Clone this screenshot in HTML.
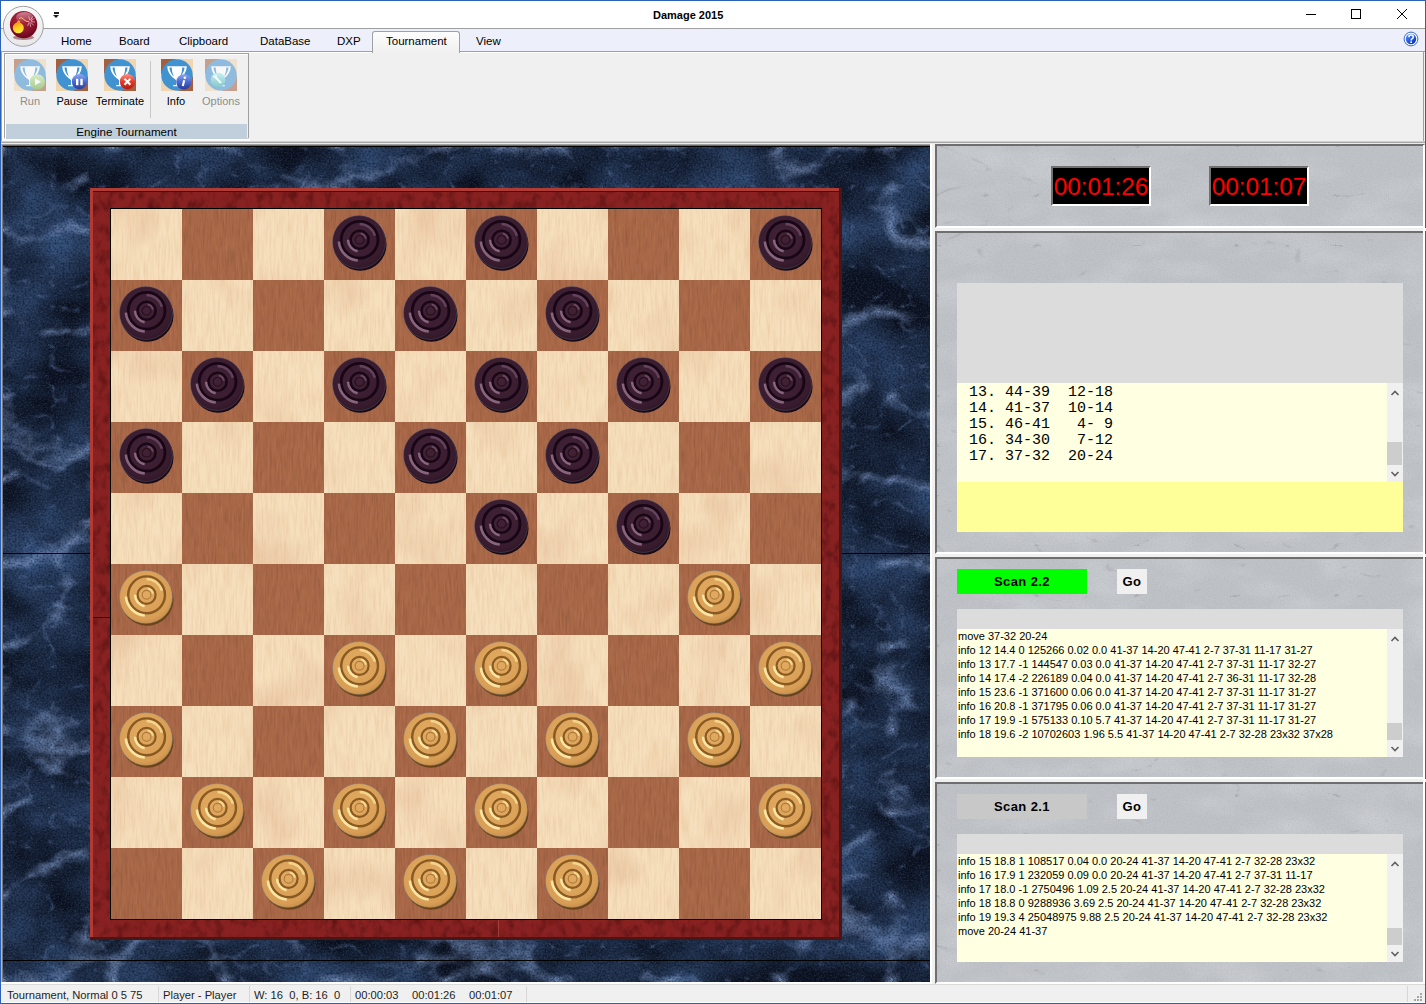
<!DOCTYPE html>
<html><head><meta charset="utf-8">
<style>
*{box-sizing:border-box}
html,body{margin:0;padding:0}
body{width:1426px;height:1004px;position:relative;overflow:hidden;background:#f0f0f0;font-family:"Liberation Sans",sans-serif;color:#000}
.a{position:absolute}
.tab{position:absolute;top:35px;font-size:11.5px;color:#000;line-height:13px;white-space:nowrap}
.rb{position:absolute;top:95px;font-size:11px;line-height:13px;white-space:nowrap;text-align:center}
.panel{position:absolute;left:935px;width:490px;border-top:2px solid #6e6e6e;border-left:2px solid #6e6e6e;border-right:2px solid #fff;border-bottom:2px solid #fff;background:#bec1c5;overflow:hidden}
.clock{position:absolute;top:166px;width:100px;height:40px;background:#000;border-top:2px solid #707070;border-left:2px solid #707070;border-right:2px solid #fff;border-bottom:2px solid #fff;color:#ff0000;font-size:24.5px;line-height:38px;text-align:center;letter-spacing:-0.1px}
.gray{position:absolute;left:957px;width:446px;background:#dcdcdc}
.list{position:absolute;left:957px;width:446px;background:#ffffe1;overflow:hidden}
.sb{position:absolute;left:1387px;width:16px;background:#f0f0f0}
.thumb{position:absolute;left:1387px;width:15px;background:#cdcdcd}
.btn{position:absolute;height:25px;font-weight:bold;font-size:13px;line-height:25px;text-align:center;letter-spacing:0.4px}
.eng{position:absolute;left:958px;font-size:11px;line-height:14px;white-space:pre;color:#000}
.st{position:absolute;top:989px;font-size:11.2px;line-height:13px;color:#1e1e1e;white-space:pre}
.sep{position:absolute;top:986px;width:1px;height:16px;background:#d7d7d7}
</style></head><body>

<!-- window frame -->
<div class="a" style="left:0;top:0;width:1426px;height:1px;background:#2b62b6"></div>
<div class="a" style="left:0;top:0;width:1px;height:1004px;background:#2b62b6"></div>
<div class="a" style="left:1425px;top:0;width:1px;height:1004px;background:#2b62b6"></div>
<div class="a" style="left:0;top:1003px;width:1426px;height:1px;background:#2b62b6"></div>

<!-- title bar -->
<div class="a" style="left:1px;top:1px;width:1424px;height:27px;background:#fff"></div>
<div class="a" style="left:1px;top:28px;width:1424px;height:1px;background:#a0a0a0"></div>
<div class="a" style="left:653px;top:9px;font-size:11px;font-weight:bold;line-height:13px;color:#000">Damage 2015</div>

<!-- tab row -->
<div class="a" style="left:1px;top:29px;width:1424px;height:22px;background:#edf0fa"></div>
<div class="a" style="left:1px;top:51px;width:1424px;height:1px;background:#a0a0a0"></div>

<!-- ribbon -->
<div class="a" style="left:1px;top:52px;width:1423px;height:89px;background:#f0f0f0;border-left:1px solid #a0a0a0"></div>
<div class="a" style="left:2px;top:52px;width:1421px;height:1px;background:#fff"></div>
<div class="a" style="left:2px;top:52px;width:2px;height:89px;background:#fff"></div>
<div class="a" style="left:1423px;top:52px;width:1px;height:89px;background:#a0a0a0"></div>
<div class="a" style="left:1px;top:141px;width:1424px;height:1px;background:#d0d0d0"></div>
<div class="a" style="left:1px;top:142px;width:1424px;height:1px;background:#a6a6a6"></div>
<div class="a" style="left:1px;top:143px;width:1424px;height:1px;background:#e8eaf8"></div>


<!-- logo -->
<svg class="a" style="left:0;top:3px" width="48" height="48" viewBox="0 0 48 48">
 <defs>
  <radialGradient id="lg1" cx="0.45" cy="0.3" r="0.75"><stop offset="0" stop-color="#b02a48"/><stop offset="0.55" stop-color="#921630"/><stop offset="1" stop-color="#640014"/></radialGradient>
  <linearGradient id="lgh" x1="0" y1="0" x2="0" y2="1"><stop offset="0" stop-color="#fff" stop-opacity="0.45"/><stop offset="1" stop-color="#fff" stop-opacity="0"/></linearGradient>
  <linearGradient id="lg2" x1="0.2" y1="0" x2="0.6" y2="1"><stop offset="0" stop-color="#f08a10"/><stop offset="0.55" stop-color="#ffd020"/><stop offset="1" stop-color="#ffe840"/></linearGradient>
  <linearGradient id="lg3" x1="0" y1="0" x2="0" y2="1"><stop offset="0" stop-color="#f8f8f8"/><stop offset="1" stop-color="#e8e8e8"/></linearGradient>
 </defs>
 <circle cx="23.3" cy="23.3" r="20" fill="url(#lg3)" stroke="#a0a0a0" stroke-width="1"/>
 <ellipse cx="23.5" cy="34.5" rx="10.5" ry="2.6" fill="#702030" opacity="0.5"/>
 <circle cx="23.6" cy="21.6" r="13.7" fill="url(#lg1)"/>
 <ellipse cx="24.5" cy="14.5" rx="8.5" ry="5.5" fill="url(#lgh)"/>
 <path d="M16.5 20.5 Q18.5 14.5 20.5 19.5 Z" fill="#f4a020"/>
 <circle cx="18.3" cy="24.8" r="5.5" fill="url(#lg2)"/>
 <path d="M19 16 Q20 14.2 21.8 15 Q23.5 16 25 17.5 Q27 19 29.2 18.4" stroke="#f4d070" stroke-width="0.9" fill="none"/>
 <g stroke="#f8e0e4" stroke-width="0.7" opacity="0.9" stroke-linecap="round">
  <path d="M30.6 17 L32.6 13.6 M31.2 17.6 L34.2 15.6 M31.4 18.6 L34.6 19 M31 19.6 L33.4 22 M30 20 L30.6 23.4 M29 19.6 L27.8 22.6 M29.6 16.6 L28.8 13.8"/>
 </g>
</svg>
<!-- quick access arrow -->
<div class="a" style="left:54px;top:12px;width:5px;height:2px;background:#1a1a1a"></div>
<div class="a" style="left:53px;top:15px;width:0;height:0;border-left:3.5px solid transparent;border-right:3.5px solid transparent;border-top:3.5px solid #1a1a1a"></div>

<!-- tabs -->
<div class="tab" style="left:61px">Home</div>
<div class="tab" style="left:119px">Board</div>
<div class="tab" style="left:179px">Clipboard</div>
<div class="tab" style="left:260px">DataBase</div>
<div class="tab" style="left:337px">DXP</div>
<div class="a" style="left:372px;top:31px;width:88px;height:22px;border:1px solid #a0a0a0;border-bottom:none;border-radius:3px 3px 0 0;background:linear-gradient(#fdfdfd,#f0f0f0)"></div>
<div class="tab" style="left:386px">Tournament</div>
<div class="tab" style="left:476px">View</div>
<!-- help -->
<svg class="a" style="left:1403px;top:31px" width="16" height="16" viewBox="0 0 16 16">
 <defs><linearGradient id="hg" x1="0.2" y1="0.1" x2="0.8" y2="0.9"><stop offset="0" stop-color="#4a86ff"/><stop offset="1" stop-color="#0634b8"/></linearGradient></defs>
 <circle cx="8" cy="8" r="6.9" fill="#f4f8ff" stroke="#3c6cc8" stroke-width="1"/>
 <circle cx="8" cy="8" r="5.2" fill="url(#hg)"/>
 <path d="M5.9 6.2 Q5.9 4.1 8.1 4.1 Q10.3 4.1 10.3 6 Q10.3 7.1 9 7.8 Q8.1 8.3 8.1 9.4" stroke="#fff" stroke-width="1.5" fill="none"/>
 <rect x="7.3" y="10.4" width="1.7" height="1.6" fill="#fff"/>
</svg>
<!-- window controls -->
<div class="a" style="left:1306px;top:14px;width:10px;height:1px;background:#000"></div>
<div class="a" style="left:1351px;top:9px;width:10px;height:10px;border:1px solid #000"></div>
<svg class="a" style="left:1396px;top:8px" width="12" height="12" viewBox="0 0 12 12"><path d="M1 1 L11 11 M11 1 L1 11" stroke="#000" stroke-width="1"/></svg>

<!-- ribbon group -->
<div class="a" style="left:4px;top:53px;width:245px;height:86px;border:1px solid #a0a0a0;border-bottom:none;border-radius:0 0 2px 2px;background:#f0f0f0"></div>
<div class="a" style="left:4px;top:139px;width:246px;height:2px;background:#fcfcfc"></div>
<div class="a" style="left:5px;top:54px;width:243px;height:1px;background:#fff"></div>
<div class="a" style="left:5px;top:54px;width:1px;height:85px;background:#fff"></div>
<div class="a" style="left:6px;top:124px;width:241px;height:15px;background:#c1cfdc"></div>
<div class="a" style="left:6px;top:126px;width:241px;font-size:11.6px;line-height:12px;text-align:center;color:#000">Engine Tournament</div>
<div class="a" style="left:150px;top:61px;width:1px;height:57px;background:#c8c8c8"></div>


<!-- ribbon icons -->
<svg class="a" style="left:0;top:0" width="0" height="0"><defs>
 <linearGradient id="bgG" x1="0" y1="0" x2="0" y2="1"><stop offset="0" stop-color="#c8e8a8"/><stop offset="1" stop-color="#68b040"/></linearGradient>
 <linearGradient id="bgB" x1="0" y1="0" x2="0" y2="1"><stop offset="0" stop-color="#90a8f0"/><stop offset="0.5" stop-color="#4a68d0"/><stop offset="1" stop-color="#2a3c98"/></linearGradient>
 <linearGradient id="bgR" x1="0" y1="0" x2="0" y2="1"><stop offset="0" stop-color="#ff9080"/><stop offset="0.5" stop-color="#e83828"/><stop offset="1" stop-color="#b01810"/></linearGradient>
 <linearGradient id="bgT" x1="0" y1="0" x2="0" y2="1"><stop offset="0" stop-color="#a0f0f0"/><stop offset="1" stop-color="#30a8b0"/></linearGradient>
</defs></svg>
<svg class="a" style="left:14px;top:59px;opacity:0.55;" width="32" height="32" viewBox="0 0 32 32">
 <rect width="32" height="32" fill="#f0d6b0"/>
 <path d="M0 0 H15 L0 15 Z" fill="#a2603e"/><path d="M32 32 H17 L32 17 Z" fill="#a2603e"/>
 <circle cx="16" cy="16" r="15.7" fill="#4092d0"/>
 <path d="M6.2 7.2 H25.8 Q25.5 14.5 19 19.6 L17 21 V26 H19.8 V27.2 H12.2 V26 H15 V21 L13 19.6 Q6.5 14.5 6.2 7.2 Z" fill="#fff"/>
 <path d="M8.4 8.5 H10.7 Q10.8 14 12.8 17.4 Q9 14 8.4 8.5 Z M23.6 8.5 H21.3 Q21.2 14 19.2 17.4 Q23 14 23.6 8.5 Z" fill="#4092d0"/>
 <circle cx="23.3" cy="22.8" r="7.6" fill="url(#bgG)"/><path d="M21 19.3 L27 22.8 L21 26.3 Z" fill="#fff"/>
</svg><svg class="a" style="left:56px;top:59px;" width="32" height="32" viewBox="0 0 32 32">
 <rect width="32" height="32" fill="#f0d6b0"/>
 <path d="M0 0 H15 L0 15 Z" fill="#a2603e"/><path d="M32 32 H17 L32 17 Z" fill="#a2603e"/>
 <circle cx="16" cy="16" r="15.7" fill="#4092d0"/>
 <path d="M6.2 7.2 H25.8 Q25.5 14.5 19 19.6 L17 21 V26 H19.8 V27.2 H12.2 V26 H15 V21 L13 19.6 Q6.5 14.5 6.2 7.2 Z" fill="#fff"/>
 <path d="M8.4 8.5 H10.7 Q10.8 14 12.8 17.4 Q9 14 8.4 8.5 Z M23.6 8.5 H21.3 Q21.2 14 19.2 17.4 Q23 14 23.6 8.5 Z" fill="#4092d0"/>
 <circle cx="23.4" cy="22.7" r="7.6" fill="url(#bgB)"/><rect x="20" y="19.8" width="2.4" height="6.4" fill="#fff"/><rect x="24.3" y="19.8" width="2.4" height="6.4" fill="#fff"/>
</svg><svg class="a" style="left:104px;top:59px;" width="32" height="32" viewBox="0 0 32 32">
 <rect width="32" height="32" fill="#f0d6b0"/>
 <path d="M0 0 H15 L0 15 Z" fill="#a2603e"/><path d="M32 32 H17 L32 17 Z" fill="#a2603e"/>
 <circle cx="16" cy="16" r="15.7" fill="#4092d0"/>
 <path d="M6.2 7.2 H25.8 Q25.5 14.5 19 19.6 L17 21 V26 H19.8 V27.2 H12.2 V26 H15 V21 L13 19.6 Q6.5 14.5 6.2 7.2 Z" fill="#fff"/>
 <path d="M8.4 8.5 H10.7 Q10.8 14 12.8 17.4 Q9 14 8.4 8.5 Z M23.6 8.5 H21.3 Q21.2 14 19.2 17.4 Q23 14 23.6 8.5 Z" fill="#4092d0"/>
 <circle cx="23.4" cy="22.7" r="7.6" fill="url(#bgR)"/><path d="M20.4 19.7 L26.4 25.7 M26.4 19.7 L20.4 25.7" stroke="#fff" stroke-width="2.1"/>
</svg><svg class="a" style="left:161px;top:59px;" width="32" height="32" viewBox="0 0 32 32">
 <rect width="32" height="32" fill="#f0d6b0"/>
 <path d="M0 0 H15 L0 15 Z" fill="#a2603e"/><path d="M32 32 H17 L32 17 Z" fill="#a2603e"/>
 <circle cx="16" cy="16" r="15.7" fill="#4092d0"/>
 <path d="M6.2 7.2 H25.8 Q25.5 14.5 19 19.6 L17 21 V26 H19.8 V27.2 H12.2 V26 H15 V21 L13 19.6 Q6.5 14.5 6.2 7.2 Z" fill="#fff"/>
 <path d="M8.4 8.5 H10.7 Q10.8 14 12.8 17.4 Q9 14 8.4 8.5 Z M23.6 8.5 H21.3 Q21.2 14 19.2 17.4 Q23 14 23.6 8.5 Z" fill="#4092d0"/>
 <circle cx="22.8" cy="22.8" r="7.6" fill="url(#bgB)"/><path d="M23.2 21.3 L21.8 27" stroke="#fff" stroke-width="2.1"/><circle cx="23.8" cy="18.7" r="1.25" fill="#fff"/>
</svg><svg class="a" style="left:205px;top:59px;opacity:0.55;" width="32" height="32" viewBox="0 0 32 32">
 <rect width="32" height="32" fill="#f0d6b0"/>
 <path d="M0 0 H15 L0 15 Z" fill="#a2603e"/><path d="M32 32 H17 L32 17 Z" fill="#a2603e"/>
 <circle cx="16" cy="16" r="15.7" fill="#4092d0"/>
 <path d="M6.2 7.2 H25.8 Q25.5 14.5 19 19.6 L17 21 V26 H19.8 V27.2 H12.2 V26 H15 V21 L13 19.6 Q6.5 14.5 6.2 7.2 Z" fill="#fff"/>
 <path d="M8.4 8.5 H10.7 Q10.8 14 12.8 17.4 Q9 14 8.4 8.5 Z M23.6 8.5 H21.3 Q21.2 14 19.2 17.4 Q23 14 23.6 8.5 Z" fill="#4092d0"/>
 <circle cx="13" cy="21" r="7.3" fill="url(#bgT)"/><path d="M9.8 17.6 L16 24" stroke="#fff" stroke-width="2.2"/><path d="M8 16.5 L10.5 19 M10.6 15.8 L11.3 18.2" stroke="#fff" stroke-width="1.4"/>
</svg>
<div class="rb" style="left:14px;width:32px;color:#8d8d8d">Run</div>
<div class="rb" style="left:52px;width:40px">Pause</div>
<div class="rb" style="left:94px;width:52px">Terminate</div>
<div class="rb" style="left:156px;width:40px">Info</div>
<div class="rb" style="left:196px;width:50px;color:#8d8d8d">Options</div>


<!-- main marble area -->
<div class="a" style="left:1px;top:144px;width:929px;height:1px;background:#a0a0a0"></div>
<div class="a" style="left:1px;top:144px;width:1px;height:840px;background:#b4b4b4"></div>
<div class="a" style="left:2px;top:145px;width:1px;height:839px;background:#7c7c7c"></div>
<div class="a" style="left:3px;top:145px;width:927px;height:1px;background:#686868"></div>
<div class="a" style="left:3px;top:146px;width:927px;height:1px;background:#000"></div>
<div class="a" style="left:930px;top:144px;width:2px;height:840px;background:#fff"></div>
<div class="a" style="left:1px;top:982px;width:931px;height:2px;background:#fff"></div>
<svg class="a" style="left:3px;top:147px" width="927" height="835">
 <defs>
  <filter id="marble" x="0" y="0" width="100%" height="100%" color-interpolation-filters="sRGB">
   <feTurbulence type="fractalNoise" baseFrequency="0.012 0.016" numOctaves="4" seed="3" result="n"/>
   <feColorMatrix in="n" type="matrix" values="0 0 0 0 0  0 0 0 0 0  0 0 0 0 0  1.8 0 0 0 -0.52" result="mot"/>
   <feFlood flood-color="#0b1222" result="base"/>
   <feFlood flood-color="#34507c" result="mc"/>
   <feComposite in="mc" in2="mot" operator="in" result="m2"/>
   <feTurbulence type="turbulence" baseFrequency="0.009 0.012" numOctaves="4" seed="11" result="t"/>
   <feColorMatrix in="t" type="matrix" values="0 0 0 0 0  0 0 0 0 0  0 0 0 0 0  -3.4 0 0 0 0.75" result="veins"/>
   <feFlood flood-color="#86a2d4" result="vc"/>
   <feComposite in="vc" in2="veins" operator="in" result="v2"/>
   <feTurbulence type="turbulence" baseFrequency="0.02 0.025" numOctaves="3" seed="23" result="t2"/>
   <feColorMatrix in="t2" type="matrix" values="0 0 0 0 0  0 0 0 0 0  0 0 0 0 0  -4 0 0 0 0.55" result="veins2"/>
   <feFlood flood-color="#58709e" result="vc2"/>
   <feComposite in="vc2" in2="veins2" operator="in" result="v3"/>
   <feTurbulence type="fractalNoise" baseFrequency="0.6" numOctaves="2" seed="1" result="sp"/>
   <feColorMatrix in="sp" type="matrix" values="0 0 0 0 0.35  0 0 0 0 0.42  0 0 0 0 0.55  0.8 0 0 0 -0.36" result="spk"/>
   <feTurbulence type="fractalNoise" baseFrequency="0.5" numOctaves="1" seed="6" result="sp2"/>
   <feColorMatrix in="sp2" type="matrix" values="0 0 0 0 0  0 0 0 0 0  0 0 0 0 0  1.0 0 0 0 -0.4" result="dk"/>
   <feMerge><feMergeNode in="base"/><feMergeNode in="m2"/><feMergeNode in="v3"/><feMergeNode in="v2"/><feMergeNode in="spk"/><feMergeNode in="dk"/></feMerge>
  </filter>
 </defs>
 <rect width="927" height="835" filter="url(#marble)"/>
</svg>
<div class="a" style="left:3px;top:553px;width:88px;height:1px;background:#000"></div>
<div class="a" style="left:841px;top:553px;width:89px;height:1px;background:#000"></div>
<div class="a" style="left:3px;top:960px;width:927px;height:1px;background:#000"></div>


<!-- board -->
<svg class="a" style="left:90px;top:188px" width="752" height="752" viewBox="0 0 752 752">
 <defs>
  <filter id="grainL" x="0" y="0" width="100%" height="100%" color-interpolation-filters="sRGB">
   <feTurbulence type="fractalNoise" baseFrequency="0.5 0.04" numOctaves="3" seed="5" result="n"/>
   <feColorMatrix in="n" type="matrix" values="0 0 0 0 0.85  0 0 0 0 0.66  0 0 0 0 0.5  0.6 0 0 0 -0.24" result="g"/>
   <feTurbulence type="fractalNoise" baseFrequency="0.02 0.015" numOctaves="2" seed="15" result="m"/>
   <feColorMatrix in="m" type="matrix" values="0 0 0 0 0.85  0 0 0 0 0.64  0 0 0 0 0.5  0.9 0 0 0 -0.46" result="mg"/>
   <feMerge result="all"><feMergeNode in="mg"/><feMergeNode in="g"/></feMerge>
   <feComposite in="all" in2="SourceGraphic" operator="in" result="g2"/>
   <feMerge><feMergeNode in="SourceGraphic"/><feMergeNode in="g2"/></feMerge>
  </filter>
  <filter id="grainD" x="0" y="0" width="100%" height="100%" color-interpolation-filters="sRGB">
   <feTurbulence type="fractalNoise" baseFrequency="0.45 0.05" numOctaves="3" seed="9" result="n"/>
   <feColorMatrix in="n" type="matrix" values="0 0 0 0 0.5  0 0 0 0 0.3  0 0 0 0 0.2  0.9 0 0 0 -0.38" result="g"/>
   <feTurbulence type="fractalNoise" baseFrequency="0.5 0.06" numOctaves="2" seed="19" result="n2"/>
   <feColorMatrix in="n2" type="matrix" values="0 0 0 0 0.76  0 0 0 0 0.5  0 0 0 0 0.36  0.8 0 0 0 -0.36" result="g3"/>
   <feMerge result="all"><feMergeNode in="g"/><feMergeNode in="g3"/></feMerge>
   <feComposite in="all" in2="SourceGraphic" operator="in" result="g2"/>
   <feMerge><feMergeNode in="SourceGraphic"/><feMergeNode in="g2"/></feMerge>
  </filter>
  <filter id="grainF" x="0" y="0" width="100%" height="100%" color-interpolation-filters="sRGB">
   <feTurbulence type="fractalNoise" baseFrequency="0.12 0.08" numOctaves="4" seed="2" result="n"/>
   <feColorMatrix in="n" type="matrix" values="0 0 0 0 0.25  0 0 0 0 0.03  0 0 0 0 0.04  1.2 0 0 0 -0.52" result="g"/>
   <feTurbulence type="fractalNoise" baseFrequency="0.8 0.3" numOctaves="2" seed="12" result="n2"/>
   <feColorMatrix in="n2" type="matrix" values="0 0 0 0 0.6  0 0 0 0 0.12  0 0 0 0 0.1  0.5 0 0 0 -0.22" result="g3"/>
   <feMerge result="all"><feMergeNode in="g3"/><feMergeNode in="g"/></feMerge>
   <feComposite in="all" in2="SourceGraphic" operator="in" result="g2"/>
   <feMerge><feMergeNode in="SourceGraphic"/><feMergeNode in="g2"/></feMerge>
  </filter>
  <radialGradient id="bkg" cx="0.45" cy="0.4" r="0.65"><stop offset="0" stop-color="#412236"/><stop offset="0.8" stop-color="#381c2e"/><stop offset="1" stop-color="#2c1424"/></radialGradient>
  <radialGradient id="wtg" cx="0.45" cy="0.4" r="0.65"><stop offset="0" stop-color="#e2aa60"/><stop offset="0.8" stop-color="#d89e56"/><stop offset="1" stop-color="#c48a44"/></radialGradient>
  <filter id="pblur" x="-50%" y="-50%" width="200%" height="200%"><feGaussianBlur stdDeviation="0.75"/></filter>
  <g id="pb">
   <circle cx="1.2" cy="2.4" r="26.3" fill="#1a0a14"/>
   <circle cx="0" cy="0" r="26.5" fill="url(#bkg)" stroke="#5a6a88" stroke-width="0.7" stroke-opacity="0.55"/>
   <g filter="url(#pblur)">
   <circle cx="0.6" cy="-2.2" r="18.4" fill="none" stroke="#12040c" stroke-width="2.8" opacity="0.8"/>
   <path d="M-1.21 18.52 A20.8 20.8 0 0 1 -20.12 -0.39" stroke="#c8a0c0" stroke-width="2.6" fill="none" opacity="0.55"/>
   <path d="M0.60 -18.00 A15.8 15.8 0 0 1 15.86 -6.29" stroke="#9c7898" stroke-width="2.4" fill="none" opacity="0.41"/>
   <circle cx="0.6" cy="-2.2" r="9" fill="none" stroke="#12040c" stroke-width="2.6" opacity="0.8"/>
   <path d="M-1.41 9.22 A11.6 11.6 0 0 1 -11.00 -2.20" stroke="#c8a0c0" stroke-width="2.4" fill="none" opacity="0.55"/>
   <path d="M1.69 -8.40 A6.3 6.3 0 0 1 6.80 -3.29" stroke="#9c7898" stroke-width="2" fill="none" opacity="0.44"/>
   <circle cx="0.6" cy="-2.2" r="4.4" fill="none" stroke="#12040c" stroke-width="1.3" opacity="0.48"/>
   </g>
  </g>
  <g id="pw">
   <circle cx="1.2" cy="2.4" r="26.3" fill="#6a4418"/>
   <circle cx="0" cy="0" r="26.5" fill="url(#wtg)" stroke="#6a7890" stroke-width="0.7" stroke-opacity="0.55"/>
   <g filter="url(#pblur)">
   <circle cx="0.6" cy="-2.2" r="18.4" fill="none" stroke="#7a4c18" stroke-width="2.4" opacity="0.85"/>
   <path d="M-1.21 18.52 A20.8 20.8 0 0 1 -20.12 -0.39" stroke="#fff2b0" stroke-width="2.6" fill="none" opacity="0.85"/>
   <path d="M0.60 -18.00 A15.8 15.8 0 0 1 15.86 -6.29" stroke="#fff0a8" stroke-width="2.4" fill="none" opacity="0.64"/>
   <circle cx="0.6" cy="-2.2" r="9" fill="none" stroke="#7a4c18" stroke-width="2.2" opacity="0.85"/>
   <path d="M-1.41 9.22 A11.6 11.6 0 0 1 -11.00 -2.20" stroke="#fff2b0" stroke-width="2.4" fill="none" opacity="0.85"/>
   <path d="M1.69 -8.40 A6.3 6.3 0 0 1 6.80 -3.29" stroke="#fff0a8" stroke-width="2" fill="none" opacity="0.68"/>
   <circle cx="0.6" cy="-2.2" r="4.4" fill="none" stroke="#7a4c18" stroke-width="1.1" opacity="0.5"/>
   </g>
  </g>
 </defs>
 <rect x="0" y="0" width="752" height="752" fill="#882222" filter="url(#grainF)"/>
 <rect x="0" y="0" width="752" height="3" fill="#b23a34"/>
 <rect x="0" y="0" width="3" height="752" fill="#b23a34"/>
 <rect x="0" y="749" width="752" height="3" fill="#4a1515"/>
 <rect x="749" y="0" width="3" height="752" fill="#4a1515"/>
 <rect x="3" y="3" width="746" height="1" fill="#3a0e0e"/>
 <rect x="3" y="429" width="17" height="1" fill="#2a0808"/>
 <rect x="408" y="732" width="1" height="17" fill="#b04848" opacity="0.7"/>
 <rect x="20" y="20" width="712" height="712" fill="#000"/>
 <g fill="#f6dfbc" filter="url(#grainL)"><rect x="21" y="21" width="71" height="71"/><rect x="163" y="21" width="71" height="71"/><rect x="305" y="21" width="71" height="71"/><rect x="447" y="21" width="71" height="71"/><rect x="589" y="21" width="71" height="71"/><rect x="92" y="92" width="71" height="71"/><rect x="234" y="92" width="71" height="71"/><rect x="376" y="92" width="71" height="71"/><rect x="518" y="92" width="71" height="71"/><rect x="660" y="92" width="71" height="71"/><rect x="21" y="163" width="71" height="71"/><rect x="163" y="163" width="71" height="71"/><rect x="305" y="163" width="71" height="71"/><rect x="447" y="163" width="71" height="71"/><rect x="589" y="163" width="71" height="71"/><rect x="92" y="234" width="71" height="71"/><rect x="234" y="234" width="71" height="71"/><rect x="376" y="234" width="71" height="71"/><rect x="518" y="234" width="71" height="71"/><rect x="660" y="234" width="71" height="71"/><rect x="21" y="305" width="71" height="71"/><rect x="163" y="305" width="71" height="71"/><rect x="305" y="305" width="71" height="71"/><rect x="447" y="305" width="71" height="71"/><rect x="589" y="305" width="71" height="71"/><rect x="92" y="376" width="71" height="71"/><rect x="234" y="376" width="71" height="71"/><rect x="376" y="376" width="71" height="71"/><rect x="518" y="376" width="71" height="71"/><rect x="660" y="376" width="71" height="71"/><rect x="21" y="447" width="71" height="71"/><rect x="163" y="447" width="71" height="71"/><rect x="305" y="447" width="71" height="71"/><rect x="447" y="447" width="71" height="71"/><rect x="589" y="447" width="71" height="71"/><rect x="92" y="518" width="71" height="71"/><rect x="234" y="518" width="71" height="71"/><rect x="376" y="518" width="71" height="71"/><rect x="518" y="518" width="71" height="71"/><rect x="660" y="518" width="71" height="71"/><rect x="21" y="589" width="71" height="71"/><rect x="163" y="589" width="71" height="71"/><rect x="305" y="589" width="71" height="71"/><rect x="447" y="589" width="71" height="71"/><rect x="589" y="589" width="71" height="71"/><rect x="92" y="660" width="71" height="71"/><rect x="234" y="660" width="71" height="71"/><rect x="376" y="660" width="71" height="71"/><rect x="518" y="660" width="71" height="71"/><rect x="660" y="660" width="71" height="71"/></g>
 <g fill="#a86848" filter="url(#grainD)"><rect x="92" y="21" width="71" height="71"/><rect x="234" y="21" width="71" height="71"/><rect x="376" y="21" width="71" height="71"/><rect x="518" y="21" width="71" height="71"/><rect x="660" y="21" width="71" height="71"/><rect x="21" y="92" width="71" height="71"/><rect x="163" y="92" width="71" height="71"/><rect x="305" y="92" width="71" height="71"/><rect x="447" y="92" width="71" height="71"/><rect x="589" y="92" width="71" height="71"/><rect x="92" y="163" width="71" height="71"/><rect x="234" y="163" width="71" height="71"/><rect x="376" y="163" width="71" height="71"/><rect x="518" y="163" width="71" height="71"/><rect x="660" y="163" width="71" height="71"/><rect x="21" y="234" width="71" height="71"/><rect x="163" y="234" width="71" height="71"/><rect x="305" y="234" width="71" height="71"/><rect x="447" y="234" width="71" height="71"/><rect x="589" y="234" width="71" height="71"/><rect x="92" y="305" width="71" height="71"/><rect x="234" y="305" width="71" height="71"/><rect x="376" y="305" width="71" height="71"/><rect x="518" y="305" width="71" height="71"/><rect x="660" y="305" width="71" height="71"/><rect x="21" y="376" width="71" height="71"/><rect x="163" y="376" width="71" height="71"/><rect x="305" y="376" width="71" height="71"/><rect x="447" y="376" width="71" height="71"/><rect x="589" y="376" width="71" height="71"/><rect x="92" y="447" width="71" height="71"/><rect x="234" y="447" width="71" height="71"/><rect x="376" y="447" width="71" height="71"/><rect x="518" y="447" width="71" height="71"/><rect x="660" y="447" width="71" height="71"/><rect x="21" y="518" width="71" height="71"/><rect x="163" y="518" width="71" height="71"/><rect x="305" y="518" width="71" height="71"/><rect x="447" y="518" width="71" height="71"/><rect x="589" y="518" width="71" height="71"/><rect x="92" y="589" width="71" height="71"/><rect x="234" y="589" width="71" height="71"/><rect x="376" y="589" width="71" height="71"/><rect x="518" y="589" width="71" height="71"/><rect x="660" y="589" width="71" height="71"/><rect x="21" y="660" width="71" height="71"/><rect x="163" y="660" width="71" height="71"/><rect x="305" y="660" width="71" height="71"/><rect x="447" y="660" width="71" height="71"/><rect x="589" y="660" width="71" height="71"/></g>
 <use href="#pb" x="269" y="54"/><use href="#pb" x="411" y="54"/><use href="#pb" x="695" y="54"/><use href="#pb" x="56" y="125"/><use href="#pb" x="340" y="125"/><use href="#pb" x="482" y="125"/><use href="#pb" x="127" y="196"/><use href="#pb" x="269" y="196"/><use href="#pb" x="411" y="196"/><use href="#pb" x="553" y="196"/><use href="#pb" x="695" y="196"/><use href="#pb" x="56" y="267"/><use href="#pb" x="340" y="267"/><use href="#pb" x="482" y="267"/><use href="#pb" x="411" y="338"/><use href="#pb" x="553" y="338"/><use href="#pw" x="56" y="409"/><use href="#pw" x="624" y="409"/><use href="#pw" x="269" y="480"/><use href="#pw" x="411" y="480"/><use href="#pw" x="695" y="480"/><use href="#pw" x="56" y="551"/><use href="#pw" x="340" y="551"/><use href="#pw" x="482" y="551"/><use href="#pw" x="624" y="551"/><use href="#pw" x="127" y="622"/><use href="#pw" x="269" y="622"/><use href="#pw" x="411" y="622"/><use href="#pw" x="695" y="622"/><use href="#pw" x="198" y="693"/><use href="#pw" x="340" y="693"/><use href="#pw" x="482" y="693"/>
</svg>


<!-- right panels -->
<svg class="a" style="left:0;top:0" width="0" height="0">
 <defs>
  <filter id="stone" x="0" y="0" width="100%" height="100%" color-interpolation-filters="sRGB">
   <feTurbulence type="fractalNoise" baseFrequency="0.7" numOctaves="2" seed="4" result="n"/>
   <feColorMatrix in="n" type="matrix" values="0 0 0 0 0.6  0 0 0 0 0.62  0 0 0 0 0.65  0.5 0 0 0 -0.2" result="g"/>
   <feTurbulence type="fractalNoise" baseFrequency="0.015 0.03" numOctaves="3" seed="8" result="n2"/>
   <feColorMatrix in="n2" type="matrix" values="0 0 0 0 0.86  0 0 0 0 0.87  0 0 0 0 0.89  0.9 0 0 0 -0.38" result="g2"/>
   <feTurbulence type="turbulence" baseFrequency="0.01 0.02" numOctaves="3" seed="21" result="t"/>
   <feColorMatrix in="t" type="matrix" values="0 0 0 0 0.55  0 0 0 0 0.57  0 0 0 0 0.6  -6 0 0 0 0.35" result="ln"/>
   <feMerge><feMergeNode in="SourceGraphic"/><feMergeNode in="g2"/><feMergeNode in="g"/><feMergeNode in="ln"/></feMerge>
  </filter>
 </defs>
</svg>
<div class="panel" style="top:144px;height:84px"></div>
<div class="panel" style="top:231px;height:323px"></div>
<div class="panel" style="top:557px;height:222px"></div>
<div class="panel" style="top:782px;height:202px"></div>
<svg class="a" style="left:937px;top:146px" width="486" height="836">
 <rect width="486" height="836" fill="#bfc2c6" filter="url(#stone)"/>
</svg>
<div class="a" style="left:937px;top:226px;width:488px;height:2px;background:#fff"></div>
<div class="a" style="left:935px;top:228px;width:491px;height:3px;background:#f0f0f0"></div>
<div class="a" style="left:935px;top:231px;width:490px;height:2px;background:#6e6e6e"></div>
<div class="a" style="left:937px;top:552px;width:488px;height:2px;background:#fff"></div>
<div class="a" style="left:935px;top:554px;width:491px;height:3px;background:#f0f0f0"></div>
<div class="a" style="left:935px;top:557px;width:490px;height:2px;background:#6e6e6e"></div>
<div class="a" style="left:937px;top:777px;width:488px;height:2px;background:#fff"></div>
<div class="a" style="left:935px;top:779px;width:491px;height:3px;background:#f0f0f0"></div>
<div class="a" style="left:935px;top:782px;width:490px;height:2px;background:#6e6e6e"></div>
<div class="a" style="left:937px;top:982px;width:488px;height:2px;background:#fff"></div>
<div class="a" style="left:1423px;top:145px;width:2px;height:839px;background:#fff"></div>

<!-- clocks -->
<div class="clock" style="left:1051px">00:01:26</div>
<div class="clock" style="left:1209px">00:01:07</div>

<!-- notation -->
<div class="gray" style="top:283px;height:100px"></div>
<div class="list" style="top:383px;height:99px"></div>
<div class="a" style="left:969px;top:385px;font-family:'Liberation Mono',monospace;font-size:15px;line-height:16px;white-space:pre;color:#000">13. 44-39  12-18
14. 41-37  10-14
15. 46-41   4- 9
16. 34-30   7-12
17. 37-32  20-24</div>
<div class="sb" style="top:383px;height:99px"></div>
<div class="thumb" style="top:442px;height:23px"></div>
<div class="a" style="left:957px;top:482px;width:446px;height:50px;background:#ffff99"></div>

<!-- engine 1 -->
<div class="btn" style="left:957px;top:569px;width:130px;background:#00ff00">Scan 2.2</div>
<div class="btn" style="left:1117px;top:569px;width:30px;background:#f0f0f0">Go</div>
<div class="gray" style="top:609px;height:20px"></div>
<div class="list" style="top:629px;height:128px"></div>
<div class="eng" style="top:629px">move 37-32 20-24
info 12 14.4 0 125266 0.02 0.0 41-37 14-20 47-41 2-7 37-31 11-17 31-27
info 13 17.7 -1 144547 0.03 0.0 41-37 14-20 47-41 2-7 37-31 11-17 32-27
info 14 17.4 -2 226189 0.04 0.0 41-37 14-20 47-41 2-7 36-31 11-17 32-28
info 15 23.6 -1 371600 0.06 0.0 41-37 14-20 47-41 2-7 37-31 11-17 31-27
info 16 20.8 -1 371795 0.06 0.0 41-37 14-20 47-41 2-7 37-31 11-17 31-27
info 17 19.9 -1 575133 0.10 5.7 41-37 14-20 47-41 2-7 37-31 11-17 31-27
info 18 19.6 -2 10702603 1.96 5.5 41-37 14-20 47-41 2-7 32-28 23x32 37x28</div>
<div class="sb" style="top:629px;height:128px"></div>
<div class="thumb" style="top:723px;height:17px"></div>

<!-- engine 2 -->
<div class="btn" style="left:957px;top:794px;width:130px;background:#c8c8c8">Scan 2.1</div>
<div class="btn" style="left:1117px;top:794px;width:30px;background:#f0f0f0">Go</div>
<div class="gray" style="top:834px;height:20px"></div>
<div class="list" style="top:854px;height:108px"></div>
<div class="eng" style="top:854px">info 15 18.8 1 108517 0.04 0.0 20-24 41-37 14-20 47-41 2-7 32-28 23x32
info 16 17.9 1 232059 0.09 0.0 20-24 41-37 14-20 47-41 2-7 37-31 11-17
info 17 18.0 -1 2750496 1.09 2.5 20-24 41-37 14-20 47-41 2-7 32-28 23x32
info 18 18.8 0 9288936 3.69 2.5 20-24 41-37 14-20 47-41 2-7 32-28 23x32
info 19 19.3 4 25048975 9.88 2.5 20-24 41-37 14-20 47-41 2-7 32-28 23x32
move 20-24 41-37</div>
<div class="sb" style="top:854px;height:108px"></div>
<div class="thumb" style="top:928px;height:17px"></div>

<!-- scroll arrows -->
<svg class="a" style="left:1387px;top:0" width="16" height="1004">
 <g stroke="#606060" stroke-width="1.6" fill="none">
  <path d="M4.5 395 L8 391.5 L11.5 395"/><path d="M4.5 472 L8 475.5 L11.5 472"/>
  <path d="M4.5 641 L8 637.5 L11.5 641"/><path d="M4.5 747 L8 750.5 L11.5 747"/>
  <path d="M4.5 866 L8 862.5 L11.5 866"/><path d="M4.5 952 L8 955.5 L11.5 952"/>
 </g>
</svg>

<!-- status bar -->
<div class="a" style="left:1px;top:984px;width:1424px;height:1px;background:#dadada"></div>
<div class="a" style="left:1px;top:1002px;width:1424px;height:1px;background:#fbfbf8"></div>
<div class="st" style="left:7px">Tournament, Normal 0 5 75</div>
<div class="sep" style="left:158px"></div>
<div class="st" style="left:163px">Player - Player</div>
<div class="sep" style="left:249px"></div>
<div class="st" style="left:254px">W: 16  0, B: 16  0</div>
<div class="sep" style="left:350px"></div>
<div class="st" style="left:355px">00:00:03</div>
<div class="st" style="left:412px">00:01:26</div>
<div class="st" style="left:469px">00:01:07</div>
<div class="sep" style="left:526px"></div>
<div class="sep" style="left:1407px"></div>
<div class="a" style="left:1420px;top:993px;width:2px;height:2px;background:#a8a8a8"></div>
<div class="a" style="left:1417px;top:996px;width:2px;height:2px;background:#a8a8a8"></div>
<div class="a" style="left:1420px;top:996px;width:2px;height:2px;background:#a8a8a8"></div>
<div class="a" style="left:1414px;top:999px;width:2px;height:2px;background:#a8a8a8"></div>
<div class="a" style="left:1417px;top:999px;width:2px;height:2px;background:#a8a8a8"></div>
<div class="a" style="left:1420px;top:999px;width:2px;height:2px;background:#a8a8a8"></div>

</body></html>
